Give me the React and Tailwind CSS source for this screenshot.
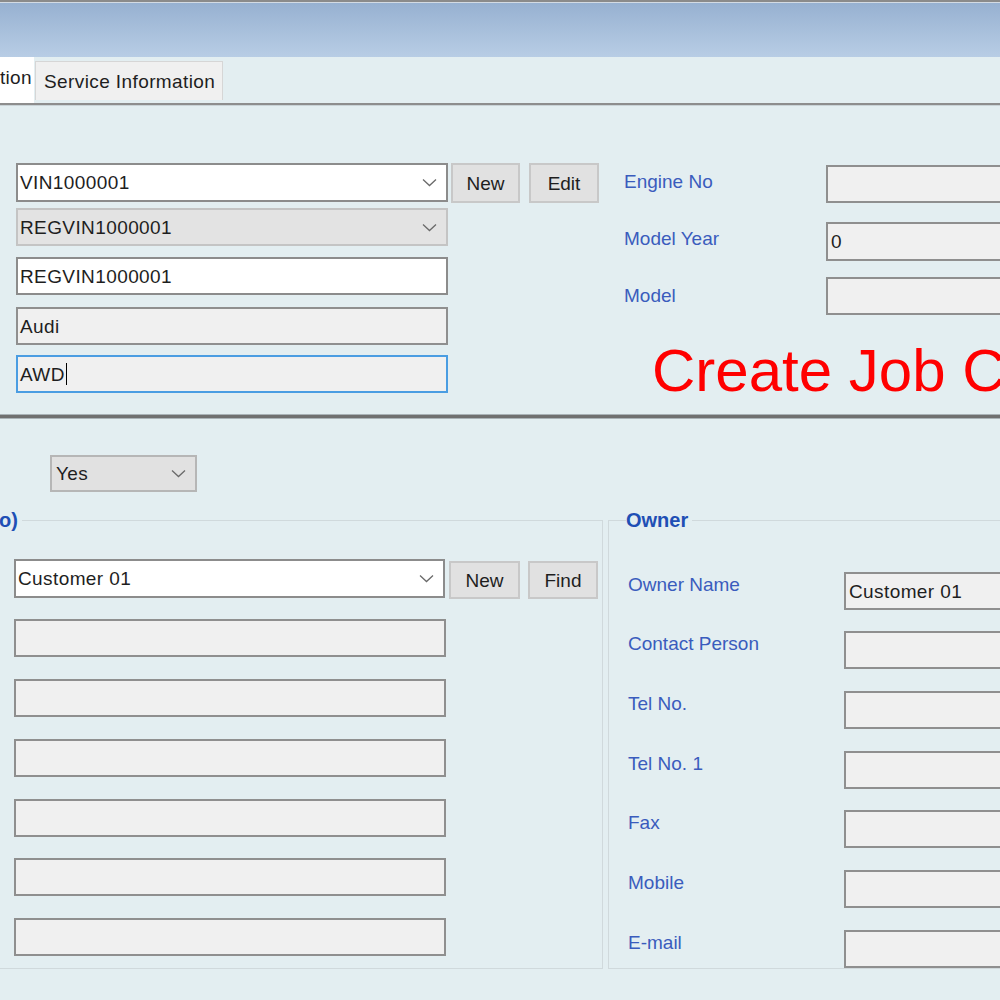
import React from 'react'

// colour sets for the WinForms style boxes
const tones = {
  white: 'bg-white border-[#8c8c8c]',
  ro: 'bg-[#f0f0f0] border-[#8f8f8f]',
  off: 'bg-[#e3e3e3] border-[#c4c4c4]',
  focus: 'bg-[#f0f0f0] border-[#4a9de2]',
  drop: 'bg-[#e1e1e1] border-[#b6b6b6]',
}

function Chevron() {
  return (
    <svg width="15" height="9" viewBox="0 0 15 9" className="mr-[9px] shrink-0">
      <path d="M1 1.5l6.5 6 6.5-6" fill="none" stroke="#6a6a6a" strokeWidth="1.3" />
    </svg>
  )
}

function Field({ tone = 'ro', className = '', arrow, caret, children }) {
  return (
    <div className={`flex items-center border-2 pl-[2px] ${tones[tone]} ${className}`}>
      <span className="flex-1 flex items-center whitespace-nowrap leading-none tracking-[0.4px]">
        {children}
        {caret && <span className="inline-block w-[1px] h-[22px] bg-black ml-[1px]" />}
      </span>
      {arrow && <Chevron />}
    </div>
  )
}

function Btn({ className = '', children }) {
  return (
    <button className={`flex items-center justify-center border-2 border-[#c8c8c8] bg-[#e1e1e1] text-[#1e1e1e] leading-none ${className}`}>
      {children}
    </button>
  )
}

const ownerRows = [
  { label: 'Owner Name', value: 'Customer 01', mt: 'mt-[40px]' },
  { label: 'Contact Person', value: '', mt: 'mt-[21px]' },
  { label: 'Tel No.', value: '', mt: 'mt-[22px]' },
  { label: 'Tel No. 1', value: '', mt: 'mt-[22px]' },
  { label: 'Fax', value: '', mt: 'mt-[21px]' },
  { label: 'Mobile', value: '', mt: 'mt-[22px]' },
  { label: 'E-mail', value: '', mt: 'mt-[22px]' },
]

const billGaps = ['mt-[20px]', 'mt-[22px]', 'mt-[22px]', 'mt-[22px]', 'mt-[21px]', 'mt-[22px]']

export default function App() {
  return (
    <div className="w-[1000px] h-[1000px] overflow-hidden bg-[#e3eef1] font-['Liberation_Sans',Arial,sans-serif] text-[19px] text-[#1e1e1e]">
      {/* window top */}
      <div className="h-[2px] bg-[#8b8b8b]" />
      <div className="h-[1px] bg-[#d3dbe4]" />
      <div className="h-[54px] bg-gradient-to-b from-[#97b1d1] to-[#b8cde5]" />

      {/* tabs */}
      <div className="flex items-start h-[46px]">
        <div className="w-[34px] h-[46px] bg-white flex items-center pb-[6px] leading-none whitespace-nowrap tracking-[0.3px]">tion</div>
        <div className="ml-[1px] mt-[4px] h-[39px] w-[188px] pl-[8px] bg-[#f0f0f0] border border-b-0 border-[#d6d6d6] flex items-center leading-none whitespace-nowrap tracking-[0.4px]">
          Service Information
        </div>
      </div>
      <div className="h-[2px] bg-[#8d8d8d]" />
      <div className="h-[1px] bg-[#c9d3d7]" />

      {/* vehicle section */}
      <div className="flex h-[308px]">
        <div className="w-[624px] shrink-0 pl-[16px] pt-[57px]">
          <div className="flex items-start">
            <Field tone="white" arrow className="w-[432px] h-[39px]">VIN1000001</Field>
            <Btn className="ml-[3px] w-[69px] h-[40px]">New</Btn>
            <Btn className="ml-[9px] w-[70px] h-[40px]">Edit</Btn>
          </div>
          <Field tone="off" arrow className="mt-[5px] w-[432px] h-[38px]">REGVIN1000001</Field>
          <Field tone="white" className="mt-[11px] w-[432px] h-[38px]">REGVIN1000001</Field>
          <Field tone="ro" className="mt-[12px] w-[432px] h-[38px]">Audi</Field>
          <Field tone="focus" caret className="mt-[10px] w-[432px] h-[38px]">AWD</Field>
        </div>

        <div className="flex-1 min-w-0 pt-[59px]">
          <div className="flex items-center h-[38px]">
            <span className="w-[202px] shrink-0 text-[#3a5cbd] -mt-[4px]">Engine No</span>
            <Field className="w-[300px] h-[38px] shrink-0" />
          </div>
          <div className="flex items-center h-[39px] mt-[19px]">
            <span className="w-[202px] shrink-0 text-[#3a5cbd] -mt-[5px]">Model Year</span>
            <Field className="w-[300px] h-[39px] shrink-0 pl-[3px]">0</Field>
          </div>
          <div className="flex items-center h-[38px] mt-[16px]">
            <span className="w-[202px] shrink-0 text-[#3a5cbd]">Model</span>
            <Field className="w-[300px] h-[38px] shrink-0" />
          </div>
          <div className="mt-[26px] ml-[28px] text-[60px] leading-none text-[#ff0000] whitespace-nowrap">Create Job Card</div>
        </div>
      </div>

      {/* splitter */}
      <div className="h-[1px] bg-[#a9b2b6]" />
      <div className="h-[3px] bg-[#707070]" />
      <div className="h-[1px] bg-[#aab3b7]" />

      {/* customer section */}
      <div className="pt-[36px]">
        <Field tone="drop" arrow className="ml-[50px] w-[147px] h-[37px] pl-[4px]">Yes</Field>

        <div className="mt-[16px] flex items-start gap-[5px]">
          <fieldset className="-ml-[2px] w-[605px] shrink-0 border border-[#d0d9dc] pb-[12px]">
            <legend className="text-[20px] font-bold leading-[24px] text-[#1f4fb5] pr-[4px]">o)</legend>
            <div className="pl-[15px] pt-[27px]">
              <div className="flex items-start h-[40px]">
                <Field tone="white" arrow className="w-[431px] h-[39px]">Customer 01</Field>
                <Btn className="ml-[4px] mt-[2px] w-[71px] h-[38px]">New</Btn>
                <Btn className="ml-[8px] mt-[2px] w-[70px] h-[38px]">Find</Btn>
              </div>
              {billGaps.map((mt, i) => (
                <Field key={i} className={`${mt} w-[432px] h-[38px]`} />
              ))}
            </div>
          </fieldset>

          <fieldset className="w-[500px] shrink-0 border border-[#d0d9dc] pl-[17px]">
            <legend className="text-[20px] font-bold leading-[24px] text-[#1f4fb5] pr-[4px]">Owner</legend>
            {ownerRows.map((r) => (
              <div key={r.label} className={`${r.mt} flex items-start h-[38px] pl-[2px]`}>
                <span className="w-[216px] shrink-0 leading-[24px] mt-[1px] text-[#3a5cbd] whitespace-nowrap">{r.label}</span>
                <Field className="w-[300px] h-[38px] shrink-0 pl-[3px]">{r.value}</Field>
              </div>
            ))}
          </fieldset>
        </div>
      </div>
    </div>
  )
}
